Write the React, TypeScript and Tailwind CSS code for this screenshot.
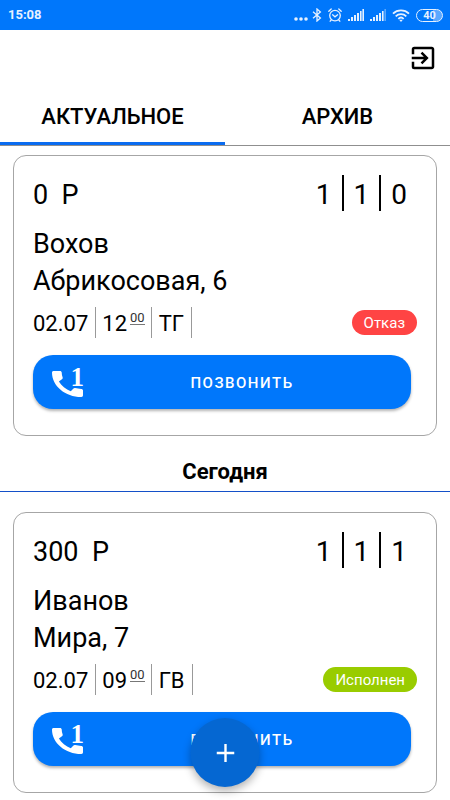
import { MdExitToApp } from "react-icons/md";

type Order = {
  price: string;
  counts: string[];
  client: string;
  address: string;
  date: string;
  hour: string;
  minutes: string;
  code: string;
  status: "Отказ" | "Исполнен";
};

const refused: Order = {
  price: "0",
  counts: ["1", "1", "0"],
  client: "Вохов",
  address: "Абрикосовая, 6",
  date: "02.07",
  hour: "12",
  minutes: "00",
  code: "ТГ",
  status: "Отказ",
};

const done: Order = {
  price: "300",
  counts: ["1", "1", "1"],
  client: "Иванов",
  address: "Мира, 7",
  date: "02.07",
  hour: "09",
  minutes: "00",
  code: "ГВ",
  status: "Исполнен",
};

function Signal({ weak = false }: { weak?: boolean }) {
  return (
    <svg width="16" height="12" viewBox="0 0 16 12" fill="#e6f1ff" aria-hidden="true">
      <rect x="0" y="10" width="2" height="2" />
      <rect x="3" y="8" width="2" height="4" />
      <rect x="6" y="6" width="2" height="6" />
      <rect x="9" y="4" width="2" height="8" />
      <rect x="12" y="2" width="1.6" height="10" />
      <rect x="14.4" y="0" width="1.6" height="12" opacity={weak ? 0.4 : 1} />
    </svg>
  );
}

function StatusBar() {
  return (
    <div className="flex h-[30px] items-center justify-between bg-[#0077fb] pr-[7px] pl-2 text-[#e6f1ff]">
      <span className="text-[13px] font-bold">15:08</span>
      <div className="flex items-center gap-[6px]">
        <div className="flex items-center gap-1">
          <svg width="14" height="14" viewBox="0 0 14 14" fill="currentColor" aria-hidden="true">
            <circle cx="2" cy="11" r="1.8" />
            <circle cx="7" cy="11" r="1.8" />
            <circle cx="12" cy="11" r="1.8" />
          </svg>
          <svg width="10" height="14" viewBox="0 0 10 14" fill="none" stroke="currentColor" strokeWidth="1.3" aria-hidden="true">
            <path d="M1 3.7 8.4 10 5 13V1l3.4 3L1 10.3" />
          </svg>
        </div>
        <svg width="14" height="14" viewBox="0 0 14 14" fill="none" stroke="currentColor" strokeWidth="1.3" strokeLinecap="round" aria-hidden="true">
          <circle cx="7" cy="7.6" r="5.3" />
          <path d="M4.6 6.8 7 8.8l2.6-2M.8 3.2 3.2 1M13.2 3.2 10.8 1M3.2 12 2.2 13.2M10.8 12l1 1.2" />
        </svg>
        <Signal />
        <Signal weak />
        <svg width="18" height="13" viewBox="0 0 18 13" fill="none" stroke="currentColor" strokeWidth="1.8" aria-hidden="true">
          <path d="M1 4.6a11.5 11.5 0 0 1 16 0M3.7 7.3a7.6 7.6 0 0 1 10.6 0M6.3 9.8a4 4 0 0 1 5.4 0" />
          <path d="M7.2 10.8 9 13l1.8-2.2Z" fill="currentColor" stroke="none" />
        </svg>
        <span className="flex h-[13px] w-[27px] items-center justify-center rounded-full border border-[#e6f1ff] bg-linear-to-r from-[#0077fb] from-65% to-[#5aa8ff] to-65% text-[11px] leading-[11px] font-bold">
          40
        </span>
      </div>
    </div>
  );
}

function PhoneIcon() {
  return (
    <span className="relative flex h-[29px] w-[31px] items-end" aria-hidden="true">
      <svg width="31" height="26" viewBox="3 3 18 18" preserveAspectRatio="none" fill="currentColor">
        <path d="M20.01 15.38c-1.23 0-2.42-.2-3.53-.56a.98.98 0 0 0-1.01.24l-1.57 1.97c-2.83-1.35-5.48-3.9-6.89-6.83l1.95-1.66c.27-.28.35-.67.24-1.02-.37-1.11-.56-2.3-.56-3.53 0-.54-.45-.99-.99-.99H4.19C3.65 3 3 3.24 3 3.99 3 13.28 10.73 21 20.01 21c.71 0 .99-.63.99-1.18v-3.45c0-.54-.45-.99-.99-.99z" />
      </svg>
      <span className="absolute -top-[4px] -right-[1px] font-['Liberation_Serif',serif] text-[27px] leading-[27px] font-bold">1</span>
    </span>
  );
}

function OrderCard({ order }: { order: Order }) {
  const chip = order.status === "Отказ" ? "bg-[#ff4444]" : "bg-[#99cc00]";
  return (
    <article className="mx-[13px] rounded-[13px] border border-[#a6a6a6] px-[19px] pt-[19px] pb-[26px]">
      <div className="flex h-9 justify-between leading-10">
        <span className="text-[27px] whitespace-pre">{order.price}{"  "}Р</span>
        <div className="flex divide-x-2 divide-black text-[28px]">
          {order.counts.map((n, i) => (
            <span key={i} className="px-[10px]">{n}</span>
          ))}
        </div>
      </div>
      <p className="mt-[15px] text-[27px] leading-[37px]">
        {order.client}
        <br />
        {order.address}
      </p>
      <div className="mt-[7px] flex items-center justify-between">
        <div className="flex h-[31px] divide-x divide-[#999] border-r border-[#999] text-[22px] leading-[33px]">
          <span className="pr-[7px]">{order.date}</span>
          <span className="flex px-[6px]">
            {order.hour}
            <span className="mt-1 mb-[13px] ml-[3px] border-b border-[#777] text-[13px] leading-[14px] text-[#333]">{order.minutes}</span>
          </span>
          <span className="px-[7px]">{order.code}</span>
        </div>
        <span className={`h-[25px] rounded-full px-[12px] text-[15px] leading-[27px] text-white ${chip}`}>{order.status}</span>
      </div>
      <div className="mt-[17px] pr-[6px]">
        <button
          type="button"
          className="flex h-[54px] w-full items-center rounded-[20px] bg-[#0077fb] pr-[10px] pl-[19px] text-white shadow-[0_2px_3px_rgba(0,0,0,0.3)]"
        >
          <PhoneIcon />
          <span className="flex-1 pt-[2px] text-center text-[15px] font-medium tracking-widest">ПОЗВОНИТЬ</span>
        </button>
      </div>
    </article>
  );
}

export default function App() {
  return (
    <div className="min-h-screen bg-white pb-[7px] font-[Roboto,sans-serif] text-black">
      <StatusBar />
      <header className="flex h-[56px] items-center justify-end pr-3">
        <button type="button" aria-label="Выйти">
          <MdExitToApp size={30} />
        </button>
      </header>
      <nav className="flex h-[60px] border-b border-[#8f8f8f] text-[22px] font-medium">
        <button type="button" className="flex-1 border-b-3 border-[#0a6cf0] pt-1">АКТУАЛЬНОЕ</button>
        <button type="button" className="flex-1 border-b-3 border-transparent pt-1">АРХИВ</button>
      </nav>
      <main className="pt-[9px]">
        <OrderCard order={refused} />
        <div className="mt-[19px] mb-5 border-b border-b-[#1450c8] pb-[2px]">
          <h2 className="text-center text-[22px] leading-[34px] font-bold">Сегодня</h2>
        </div>
        <OrderCard order={done} />
      </main>
      <button
        type="button"
        aria-label="Добавить"
        className="fixed bottom-[13px] left-1/2 flex size-[69px] -translate-x-1/2 items-center justify-center rounded-full bg-[#0567d2] text-white shadow-[0_4px_8px_rgba(0,0,0,0.3)]"
      >
        <svg width="18" height="18" viewBox="0 0 18 18" stroke="currentColor" strokeWidth="2.4" aria-hidden="true">
          <path d="M9 0v18M0 9h18" />
        </svg>
      </button>
    </div>
  );
}
